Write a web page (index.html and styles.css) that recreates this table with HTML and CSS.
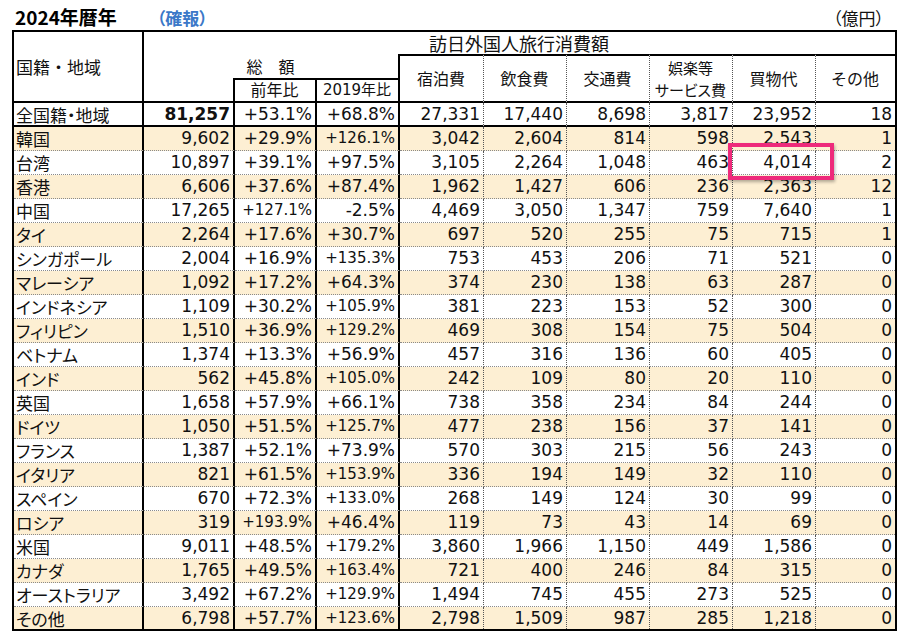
FILE: index.html
```html
<!DOCTYPE html>
<html lang="ja">
<head>
<meta charset="utf-8">
<title>2024年暦年 訪日外国人旅行消費額</title>
<link rel="stylesheet" href="styles.css">
</head>
<body>
<div class="sheet">
  <div class="titlebar">
    <span class="title">2024年暦年</span>
    <span class="status">（確報）</span>
    <span class="unit">（億円）</span>
  </div>
  <table class="grid">
    <colgroup>
      <col class="w-name"><col class="w-total"><col class="w-yoy"><col class="w-2019">
      <col class="w-cat"><col class="w-cat2"><col class="w-cat2"><col class="w-cat2"><col class="w-cat2"><col class="w-last">
    </colgroup>
    <thead>
      <tr class="hr-a">
        <th class="h-name" rowspan="3">国籍・地域</th>
        <th class="h-top" colspan="9">訪日外国人旅行消費額</th>
      </tr>
      <tr class="hr-b">
        <th class="h-sum" colspan="3">総　額</th>
        <th class="h-cat" rowspan="2">宿泊費</th>
        <th class="h-cat" rowspan="2">飲食費</th>
        <th class="h-cat" rowspan="2">交通費</th>
        <th class="h-cat h-two" rowspan="2"><span class="ln">娯楽等</span><span class="ln">サービス費</span></th>
        <th class="h-cat" rowspan="2">買物代</th>
        <th class="h-cat h-end" rowspan="2">その他</th>
      </tr>
      <tr class="hr-c">
        <th class="h-blank"></th>
        <th class="h-sub">前年比</th>
        <th class="h-sub">2019年比</th>
      </tr>
    </thead>
    <tbody>
      <tr class="all"><td class="nm">全国籍・地域</td><td class="n b">81,257</td><td class="n">+53.1%</td><td class="n">+68.8%</td><td class="n c">27,331</td><td class="n c">17,440</td><td class="n c">8,698</td><td class="n c">3,817</td><td class="n c">23,952</td><td class="n e">18</td></tr>
      <tr class="tan"><td class="nm">韓国</td><td class="n">9,602</td><td class="n">+29.9%</td><td class="n s">+126.1%</td><td class="n c">3,042</td><td class="n c">2,604</td><td class="n c">814</td><td class="n c">598</td><td class="n c">2,543</td><td class="n e">1</td></tr>
      <tr><td class="nm">台湾</td><td class="n">10,897</td><td class="n">+39.1%</td><td class="n">+97.5%</td><td class="n c">3,105</td><td class="n c">2,264</td><td class="n c">1,048</td><td class="n c">463</td><td class="n c">4,014</td><td class="n e">2</td></tr>
      <tr class="tan"><td class="nm">香港</td><td class="n">6,606</td><td class="n">+37.6%</td><td class="n">+87.4%</td><td class="n c">1,962</td><td class="n c">1,427</td><td class="n c">606</td><td class="n c">236</td><td class="n c">2,363</td><td class="n e">12</td></tr>
      <tr><td class="nm">中国</td><td class="n">17,265</td><td class="n s">+127.1%</td><td class="n">-2.5%</td><td class="n c">4,469</td><td class="n c">3,050</td><td class="n c">1,347</td><td class="n c">759</td><td class="n c">7,640</td><td class="n e">1</td></tr>
      <tr class="tan"><td class="nm">タイ</td><td class="n">2,264</td><td class="n">+17.6%</td><td class="n">+30.7%</td><td class="n c">697</td><td class="n c">520</td><td class="n c">255</td><td class="n c">75</td><td class="n c">715</td><td class="n e">1</td></tr>
      <tr><td class="nm">シンガポール</td><td class="n">2,004</td><td class="n">+16.9%</td><td class="n s">+135.3%</td><td class="n c">753</td><td class="n c">453</td><td class="n c">206</td><td class="n c">71</td><td class="n c">521</td><td class="n e">0</td></tr>
      <tr class="tan"><td class="nm">マレーシア</td><td class="n">1,092</td><td class="n">+17.2%</td><td class="n">+64.3%</td><td class="n c">374</td><td class="n c">230</td><td class="n c">138</td><td class="n c">63</td><td class="n c">287</td><td class="n e">0</td></tr>
      <tr><td class="nm">インドネシア</td><td class="n">1,109</td><td class="n">+30.2%</td><td class="n s">+105.9%</td><td class="n c">381</td><td class="n c">223</td><td class="n c">153</td><td class="n c">52</td><td class="n c">300</td><td class="n e">0</td></tr>
      <tr class="tan"><td class="nm">フィリピン</td><td class="n">1,510</td><td class="n">+36.9%</td><td class="n s">+129.2%</td><td class="n c">469</td><td class="n c">308</td><td class="n c">154</td><td class="n c">75</td><td class="n c">504</td><td class="n e">0</td></tr>
      <tr><td class="nm">ベトナム</td><td class="n">1,374</td><td class="n">+13.3%</td><td class="n">+56.9%</td><td class="n c">457</td><td class="n c">316</td><td class="n c">136</td><td class="n c">60</td><td class="n c">405</td><td class="n e">0</td></tr>
      <tr class="tan"><td class="nm">インド</td><td class="n">562</td><td class="n">+45.8%</td><td class="n s">+105.0%</td><td class="n c">242</td><td class="n c">109</td><td class="n c">80</td><td class="n c">20</td><td class="n c">110</td><td class="n e">0</td></tr>
      <tr><td class="nm">英国</td><td class="n">1,658</td><td class="n">+57.9%</td><td class="n">+66.1%</td><td class="n c">738</td><td class="n c">358</td><td class="n c">234</td><td class="n c">84</td><td class="n c">244</td><td class="n e">0</td></tr>
      <tr class="tan"><td class="nm">ドイツ</td><td class="n">1,050</td><td class="n">+51.5%</td><td class="n s">+125.7%</td><td class="n c">477</td><td class="n c">238</td><td class="n c">156</td><td class="n c">37</td><td class="n c">141</td><td class="n e">0</td></tr>
      <tr><td class="nm">フランス</td><td class="n">1,387</td><td class="n">+52.1%</td><td class="n">+73.9%</td><td class="n c">570</td><td class="n c">303</td><td class="n c">215</td><td class="n c">56</td><td class="n c">243</td><td class="n e">0</td></tr>
      <tr class="tan"><td class="nm">イタリア</td><td class="n">821</td><td class="n">+61.5%</td><td class="n s">+153.9%</td><td class="n c">336</td><td class="n c">194</td><td class="n c">149</td><td class="n c">32</td><td class="n c">110</td><td class="n e">0</td></tr>
      <tr><td class="nm">スペイン</td><td class="n">670</td><td class="n">+72.3%</td><td class="n s">+133.0%</td><td class="n c">268</td><td class="n c">149</td><td class="n c">124</td><td class="n c">30</td><td class="n c">99</td><td class="n e">0</td></tr>
      <tr class="tan"><td class="nm">ロシア</td><td class="n">319</td><td class="n s">+193.9%</td><td class="n">+46.4%</td><td class="n c">119</td><td class="n c">73</td><td class="n c">43</td><td class="n c">14</td><td class="n c">69</td><td class="n e">0</td></tr>
      <tr><td class="nm">米国</td><td class="n">9,011</td><td class="n">+48.5%</td><td class="n s">+179.2%</td><td class="n c">3,860</td><td class="n c">1,966</td><td class="n c">1,150</td><td class="n c">449</td><td class="n c">1,586</td><td class="n e">0</td></tr>
      <tr class="tan"><td class="nm">カナダ</td><td class="n">1,765</td><td class="n">+49.5%</td><td class="n s">+163.4%</td><td class="n c">721</td><td class="n c">400</td><td class="n c">246</td><td class="n c">84</td><td class="n c">315</td><td class="n e">0</td></tr>
      <tr><td class="nm">オーストラリア</td><td class="n">3,492</td><td class="n">+67.2%</td><td class="n s">+129.9%</td><td class="n c">1,494</td><td class="n c">745</td><td class="n c">455</td><td class="n c">273</td><td class="n c">525</td><td class="n e">0</td></tr>
      <tr class="tan last"><td class="nm">その他</td><td class="n">6,798</td><td class="n">+57.7%</td><td class="n s">+123.6%</td><td class="n c">2,798</td><td class="n c">1,509</td><td class="n c">987</td><td class="n c">285</td><td class="n c">1,218</td><td class="n e">0</td></tr>
    </tbody>
  </table>
  <div class="mark" aria-hidden="true"></div>
</div>
</body>
</html>
```
FILE: styles.css
```css
html, body {
  margin: 0;
  background: #fff;
}
body {
  font-family: "Noto Sans CJK JP", "Noto Sans", sans-serif;
  color: #111;
}
.sheet {
  position: relative;
  width: 906px;
  height: 640px;
}
.titlebar {
  display: flex;
  align-items: baseline;
  height: 30px;
  box-sizing: border-box;
  padding: 4px 22px 0 15px;
  line-height: 26px;
}
.title {
  font-size: 19px;
  font-weight: 700;
  color: #000;
}
.status {
  margin-left: 40px;
  font-size: 17px;
  font-weight: 700;
  color: #3b78c8;
  font-feature-settings: "palt";
}
.unit {
  margin-left: auto;
  font-size: 17px;
  font-feature-settings: "palt";
}

.grid {
  margin-left: 12px;
  width: 885px;
  table-layout: fixed;
  border-collapse: separate;
  border-spacing: 0;
  border: 2px solid #000;
  font-size: 17px;
}
.w-name { width: 130px; }
.w-total { width: 91px; }
.w-yoy { width: 82px; }
.w-2019 { width: 83px; }
.w-cat { width: 84px; }
.w-cat2 { width: 83px; }
.w-last { width: 79px; }

.grid th, .grid td {
  box-sizing: border-box;
  padding: 0 3px 0 2px;
  white-space: nowrap;
  font-weight: 400;
  line-height: 21px;
}

/* header */
.hr-a { height: 22px; }
.hr-b, .hr-c { height: 24px; }
.h-name {
  text-align: left;
  vertical-align: middle;
  border-right: 2px solid #000;
  border-bottom: 2px solid #000;
  font-size: 17px;
  padding-left: 3px;
}
.h-top {
  text-align: center;
  font-size: 18px;
  padding: 0;
}
.h-sum {
  text-align: center;
  font-size: 16px;
  border-right: 2px solid #000;
}
.h-cat {
  text-align: center;
  font-size: 16px;
  border-top: 2px solid #000;
  border-bottom: 2px solid #000;
  border-right: 1px dotted #555;
  padding: 0;
}
.h-cat.h-end { border-right: none; }
.grid .h-two {
  font-size: 15px;
  line-height: 22px;
  font-feature-settings: "palt";
}
.h-two .ln { display: block; }
.h-blank {
  border-right: 2px solid #000;
  border-bottom: 2px solid #000;
}
.h-sub {
  text-align: center;
  font-size: 16px;
  font-family: "DejaVu Sans", "Noto Sans CJK JP", sans-serif;
  border-top: 2px solid #000;
  border-right: 2px solid #000;
  border-bottom: 2px solid #000;
  padding: 0;
}
.h-sub + .h-sub { font-size: 15px; }

/* body */
.grid tbody tr { height: 24px; }
.grid tbody td {
  border-bottom: 1px dotted #8a8a8a;
}
.grid tbody tr.all td { border-bottom: 2px solid #000; }
.grid tbody tr.last td { border-bottom: none; }
.grid tbody tr.last { height: 22px; }
.tan td { background: #fdefd3; }

.nm {
  text-align: left;
  border-right: 2px solid #000;
  font-feature-settings: "palt";
}
.n {
  text-align: right;
  font-family: "DejaVu Sans", "Noto Sans", sans-serif;
  border-right: 2px solid #000;
}
.n.c { border-right: 1px dotted #555; }
.n.e { border-right: none; }
.n.b { font-weight: 700; }
.n.s { font-size: 15px; }

/* highlight annotation over the 台湾 / 買物代 cell */
.mark {
  position: absolute;
  left: 728px;
  top: 143px;
  width: 106px;
  height: 37px;
  box-sizing: border-box;
  border: 4px solid #ee2a7b;
  box-shadow: 1px 2px 3px rgba(0, 0, 0, 0.3);
}
```
